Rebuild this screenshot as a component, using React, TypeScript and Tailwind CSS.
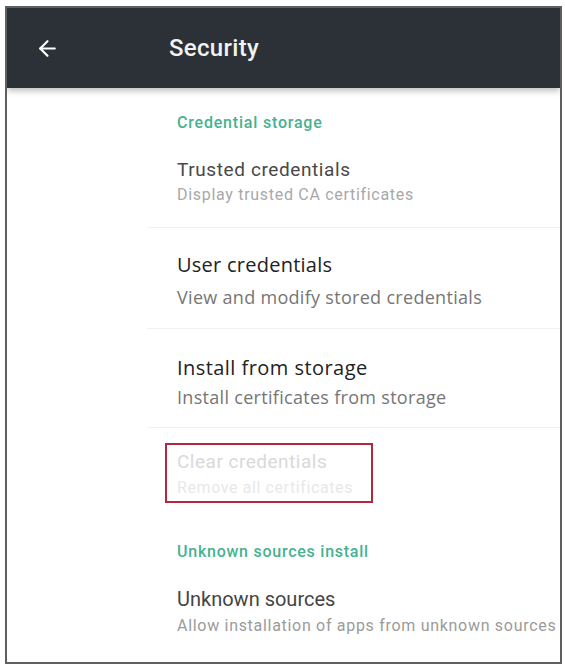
import React from 'react';
import { ArrowLeft } from 'lucide-react';

const App = () => {
  return (
    <div className="w-[565px] h-[667px] bg-white pt-[6px] pl-[5px]">
      <div className="w-[557px] h-[658px] border-2 border-[#5f5f5f] bg-white flex flex-col overflow-hidden">
        {/* Top bar */}
        <header className="relative z-10 h-[80px] shrink-0 bg-[#2b3137] flex items-center shadow-[0_3px_6px_rgba(0,0,0,0.25)]">
          <ArrowLeft className="ml-[28px] w-[25px] h-[25px] text-white" strokeWidth={2.1} />
          <h1 className="ml-[109px] text-[24px] tracking-[0.3px] font-medium text-[#f2f2f2] leading-none font-['Roboto',sans-serif]">
            Security
          </h1>
        </header>

        <div className="flex flex-col">
          <p className="pl-[170px] pt-[26px] text-[16px] tracking-[0.8px] leading-[18px] font-medium text-[#46b291] font-['Roboto',sans-serif]">
            Credential storage
          </p>

          {/* Trusted credentials */}
          <div className="ml-[140px] pl-[30px] pt-[27px] pb-[23px] border-b border-[#f1f1f1] font-['Roboto',sans-serif]">
            <p className="text-[19px] tracking-[0.6px] leading-[22px] text-[#484848]">Trusted credentials</p>
            <p className="mt-[5px] text-[16px] tracking-[0.7px] leading-[18px] text-[#a8a8a8]">
              Display trusted CA certificates
            </p>
          </div>

          {/* User credentials */}
          <div className="ml-[140px] pl-[30px] pt-[24px] pb-[20px] border-b border-[#f1f1f1] font-['Open_Sans',sans-serif]">
            <p className="text-[20px] tracking-[0.25px] leading-[26px] text-[#222222]">User credentials</p>
            <p className="mt-[8px] text-[18px] tracking-[0.3px] leading-[22px] text-[#767676]">
              View and modify stored credentials
            </p>
          </div>

          {/* Install from storage */}
          <div className="ml-[140px] pl-[30px] pt-[26px] pb-[19px] border-b border-[#f1f1f1] font-['Open_Sans',sans-serif]">
            <p className="text-[20px] tracking-[0.45px] leading-[26px] text-[#222222]">Install from storage</p>
            <p className="mt-[5px] text-[18px] tracking-[0.3px] leading-[22px] text-[#767676]">
              Install certificates from storage
            </p>
          </div>

          {/* Clear credentials (highlighted) */}
          <div className="pl-[158px] pt-[15px]">
            <div className="w-[208px] h-[60px] border-2 border-[#b3283f] pl-[10px] pt-[7px] font-['Roboto',sans-serif]">
              <p className="text-[19px] tracking-[0.5px] leading-[20px] text-[#d9d9d9]">Clear credentials</p>
              <p className="mt-[8px] text-[16px] tracking-[0.6px] leading-[16px] text-[#e8e8e8] whitespace-nowrap">
                Remove all certificates
              </p>
            </div>
          </div>

          <p className="pl-[170px] pt-[40px] text-[16px] tracking-[0.75px] leading-[18px] font-medium text-[#46b291] font-['Roboto',sans-serif]">
            Unknown sources install
          </p>

          {/* Unknown sources */}
          <div className="pl-[170px] pt-[26px] font-['Roboto',sans-serif]">
            <p className="text-[20px] leading-[24px] text-[#444444]">Unknown sources</p>
            <p className="mt-[6px] text-[16px] tracking-[0.7px] leading-[18px] text-[#9b9b9b] whitespace-nowrap">
              Allow installation of apps from unknown sources
            </p>
          </div>
        </div>
      </div>
    </div>
  );
};

export default App;
